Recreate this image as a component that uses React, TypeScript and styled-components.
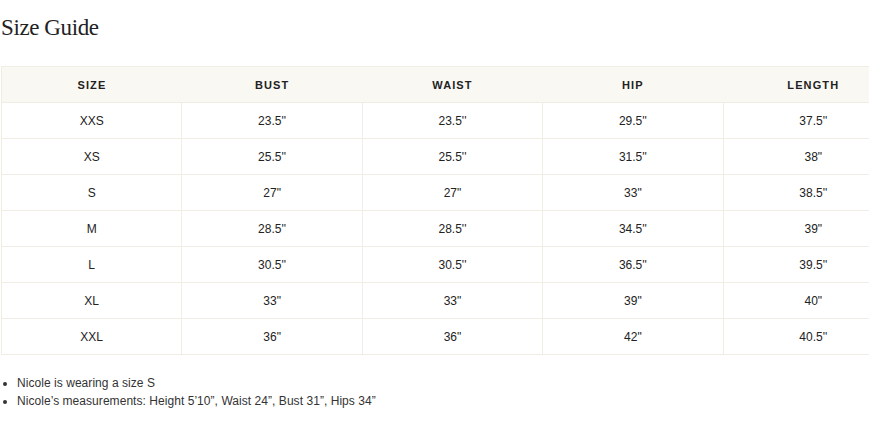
import React from "react";
import styled, { createGlobalStyle } from "styled-components";

const Global = createGlobalStyle`
  html, body { margin: 0; padding: 0; background: #ffffff; }
  body { font-family: "Liberation Sans", Arial, sans-serif; color: #222; }
`;

const Page = styled.div`
  width: 869px;
  height: 430px;
  overflow: hidden;
  padding-left: 1px;
  box-sizing: border-box;
`;

const Title = styled.h1`
  margin: 15px 0 25px 0;
  font-family: "Liberation Serif", "Times New Roman", serif;
  font-weight: 400;
  font-size: 23px;
  line-height: 26px;
  letter-spacing: -0.4px;
  color: #222;
`;

const Table = styled.table`
  width: 903px;
  border-collapse: collapse;
  table-layout: fixed;
`;

const Head = styled.th`
  height: 35px;
  padding: 0;
  background: #faf8f3;
  border-top: 1px solid #efede4;
  border-bottom: 1px solid #efede4;
  &:first-child { border-left: 1px solid #efede4; }
  font-size: 11px;
  font-weight: 700;
  letter-spacing: 1.1px;
  text-transform: uppercase;
  color: #222;
  text-align: center;
`;

const Cell = styled.td`
  height: 35px;
  padding: 0;
  border: 1px solid #efede4;
  font-size: 12px;
  color: #222;
  text-align: center;
`;

const Notes = styled.ul`
  margin: 19px 0 0 0;
  padding-left: 16px;
  font-size: 12px;
  line-height: 18px;
  letter-spacing: 0.05px;
  color: #333;
`;

const columns = ["Size", "Bust", "Waist", "Hip", "Length"];

const rows: string[][] = [
  ["XXS", "23.5''", "23.5''", "29.5''", "37.5''"],
  ["XS", "25.5''", "25.5''", "31.5''", "38\""],
  ["S", "27\"", "27\"", "33\"", "38.5''"],
  ["M", "28.5''", "28.5''", "34.5''", "39\""],
  ["L", "30.5''", "30.5''", "36.5''", "39.5''"],
  ["XL", "33\"", "33\"", "39\"", "40\""],
  ["XXL", "36\"", "36\"", "42\"", "40.5''"],
];

export default function App() {
  return (
    <>
      <Global />
      <Page>
        <Title>Size Guide</Title>
        <Table>
          <thead>
            <tr>
              {columns.map((c) => (
                <Head key={c}>{c}</Head>
              ))}
            </tr>
          </thead>
          <tbody>
            {rows.map((r) => (
              <tr key={r[0]}>
                {r.map((v, i) => (
                  <Cell key={i}>{v}</Cell>
                ))}
              </tr>
            ))}
          </tbody>
        </Table>
        <Notes>
          <li>Nicole is wearing a size S</li>
          <li>Nicole’s measurements: Height 5’10”, Waist 24”, Bust 31”, Hips 34”</li>
        </Notes>
      </Page>
    </>
  );
}
